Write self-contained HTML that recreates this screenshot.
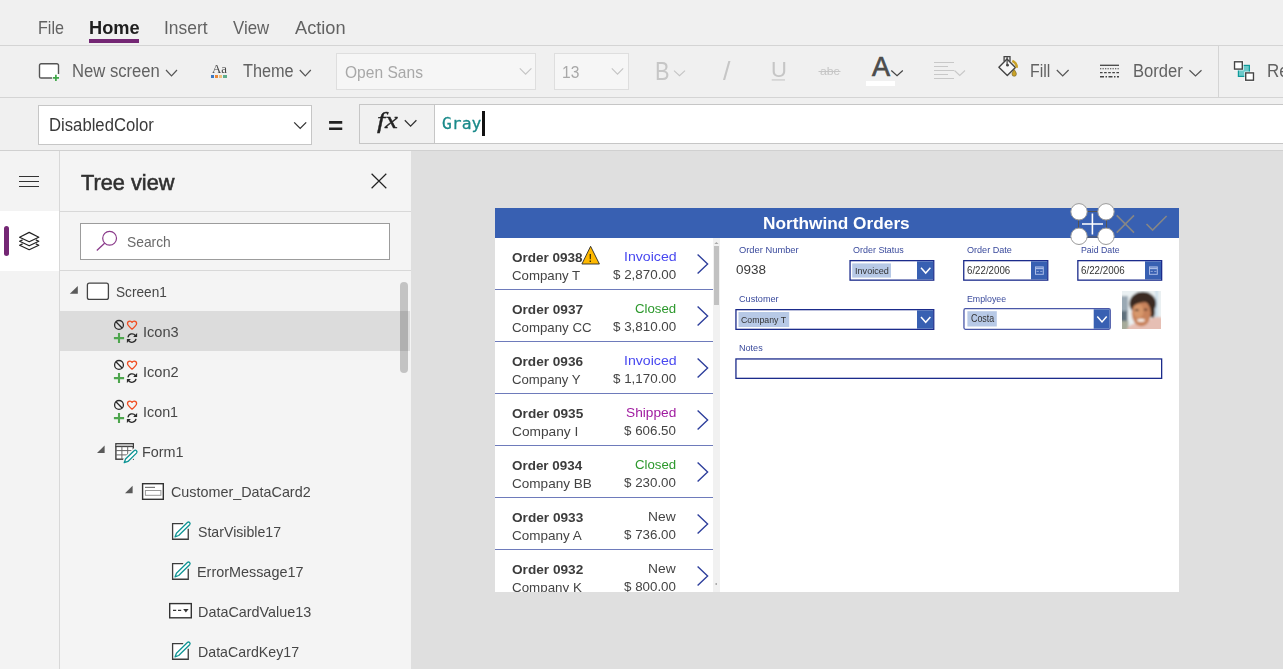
<!DOCTYPE html>
<html><head><meta charset="utf-8">
<style>
*{box-sizing:border-box;margin:0;padding:0}
html,body{width:1283px;height:669px;overflow:hidden;background:#f0f0f0;font-family:"Liberation Sans",sans-serif}
#root{position:relative;width:1283px;height:669px;overflow:hidden;background:#f0f0f0}
.t{position:absolute;white-space:nowrap;line-height:1;transform-origin:0 0}
#shapes{position:absolute;left:0;top:0}
#galclip{position:absolute;left:0;top:0;width:1283px;height:592px;overflow:hidden}
</style></head><body>
<div id="root">
<svg id="shapes" width="1283" height="669" viewBox="0 0 1283 669">
<defs>
 <filter id="blur" x="-10%" y="-10%" width="120%" height="120%"><feGaussianBlur stdDeviation="0.9"/></filter>
 <clipPath id="appclip"><rect x="495" y="208" width="684" height="384"/></clipPath>
 <clipPath id="photoclip"><rect x="1122" y="291" width="39" height="38"/></clipPath>
</defs>
<g shape-rendering="crispEdges">
 <!-- bars -->
 <rect x="0" y="0" width="1283" height="151" fill="#f0f0f0"/>
 <rect x="0" y="45" width="1283" height="1" fill="#d4d4d4"/>
 <rect x="0" y="97" width="1283" height="1" fill="#d4d4d4"/>
 <rect x="0" y="150" width="1283" height="1" fill="#d0d0d0"/>
 <rect x="89" y="39" width="50" height="4" fill="#742774"/>
 <!-- font dropdowns -->
 <rect x="336.5" y="53.5" width="199" height="36" fill="#f6f6f6" stroke="#dedede"/>
 <rect x="554.5" y="53.5" width="74" height="36" fill="#f6f6f6" stroke="#dedede"/>
 <rect x="1218" y="46" width="1" height="51" fill="#d4d4d4"/>
 <rect x="866" y="81" width="29" height="5" fill="#fff"/>
 <!-- formula bar -->
 <rect x="38.5" y="105.5" width="273" height="39" fill="#fff" stroke="#c6c6c6"/>
 <rect x="359.5" y="104.5" width="940" height="39" fill="#fff" stroke="#c6c6c6"/>
 <rect x="360" y="105" width="74" height="38" fill="#f1f1f1"/>
 <rect x="434" y="105" width="1" height="38" fill="#c6c6c6"/>
 <rect x="482" y="111" width="3" height="25" fill="#111"/>
 <!-- rail -->
 <rect x="0" y="151" width="59" height="518" fill="#f3f3f3"/>
 <rect x="59" y="151" width="1" height="518" fill="#d8d8d8"/>
 <rect x="0" y="211" width="59" height="60" fill="#fff"/>
 <!-- tree -->
 <rect x="60" y="151" width="351" height="518" fill="#f4f4f4"/>
 <rect x="60" y="211" width="351" height="1" fill="#d8d8d8"/>
 <rect x="60" y="270" width="351" height="1" fill="#d8d8d8"/>
 <rect x="80.5" y="223.5" width="309" height="36" fill="#fff" stroke="#9c9c9c"/>
 <rect x="60" y="311" width="350" height="40" fill="#dcdcdc"/>
 <!-- canvas -->
 <rect x="411" y="151" width="872" height="518" fill="#dfdfdf"/>
 <rect x="495" y="208" width="684" height="384" fill="#fff"/>
 <rect x="495" y="208" width="684" height="30" fill="#3860b2"/>
 <!-- gallery separators -->
 <g fill="#6e7bbb">
 <rect x="495" y="289" width="217.5" height="1"/><rect x="495" y="341" width="217.5" height="1"/><rect x="495" y="393" width="217.5" height="1"/>
 <rect x="495" y="445" width="217.5" height="1"/><rect x="495" y="497" width="217.5" height="1"/><rect x="495" y="549" width="217.5" height="1"/>
 </g>
 <!-- gallery scrollbar -->
 <rect x="713" y="238" width="7" height="354" fill="#f1f1f1"/>
 <rect x="714" y="246" width="5" height="59" fill="#c1c1c1"/>
</g>
<!-- rounded items -->
<rect x="4" y="226" width="5" height="30" rx="2.5" fill="#742774"/>
<rect x="400" y="282" width="8" height="91" rx="4" fill="#000" fill-opacity="0.2"/>
<rect x="39.5" y="63.8" width="19" height="14.2" rx="1.6" fill="#fff"/>
<path d="M52,78 H41.1 a1.6,1.6 0 0 1 -1.6,-1.6 V65.4 a1.6,1.6 0 0 1 1.6,-1.6 H56.9 a1.6,1.6 0 0 1 1.6,1.6 V74" fill="none" stroke="#555" stroke-width="1.4"/>
<path d="M52.8,77.8 H59 M55.9,74.7 V80.9" stroke="#3fa648" stroke-width="1.7"/>
<path d="M166.00,70.00 L171.50,75.80 L177.00,70.00" fill="none" stroke="#555" stroke-width="1.2"/>
<g shape-rendering="crispEdges"><rect x="210.6" y="75" width="3.4" height="3.4" fill="#3b78c4"/><rect x="215" y="75" width="3" height="3.4" fill="#e9873a"/><rect x="219" y="75" width="3" height="3.4" fill="#ecc17e"/><rect x="223" y="75" width="3.6" height="3.4" fill="#5fae8c"/></g>
<path d="M299.80,70.00 L305.30,75.90 L310.80,70.00" fill="none" stroke="#555" stroke-width="1.2"/>
<path d="M519.80,68.30 L525.60,74.20 L531.40,68.30" fill="none" stroke="#c4c4c4" stroke-width="1.1"/>
<path d="M611.80,68.30 L617.50,74.20 L623.20,68.30" fill="none" stroke="#c4c4c4" stroke-width="1.1"/>
<path d="M674.00,70.70 L679.50,75.70 L685.00,70.70" fill="none" stroke="#c4c4c4" stroke-width="1.1"/>
<rect x="771.7" y="79.4" width="13.3" height="1.1" fill="#c6c6c6"/>
<rect x="818.5" y="71" width="22" height="1" fill="#c6c6c6"/>
<path d="M891.30,70.50 L897.05,75.80 L902.80,70.50" fill="none" stroke="#444" stroke-width="1.2"/>
<g fill="#c8c8c8" shape-rendering="crispEdges"><rect x="934" y="62" width="20" height="1"/><rect x="934" y="66" width="14" height="1"/><rect x="934" y="70" width="20" height="1"/><rect x="934" y="74" width="14" height="1"/><rect x="934" y="78" width="20" height="1"/></g>
<path d="M954.50,70.50 L959.75,75.50 L965.00,70.50" fill="none" stroke="#c8c8c8" stroke-width="1.1"/>
<path d="M998.9,67.2 L1007,59.1 L1015.4,67.5 L1007.3,75.4 Z" fill="#f6f6f6" stroke="#444" stroke-width="1.4" stroke-linejoin="round"/>
<path d="M1004.1,61.5 V56.6 H1010 V61.5" fill="none" stroke="#444" stroke-width="1.3"/>
<path d="M1007.1,57 V65" stroke="#444" stroke-width="1.2"/><circle cx="1007.5" cy="65.2" r="1.4" fill="#444"/>
<path d="M1012.3,60.9 C1015,62 1016.7,64.6 1016.8,67.8" fill="none" stroke="#c9a227" stroke-width="2.5"/>
<path d="M1014.2,69.6 C1015.9,71.9 1016.4,73.1 1016.4,74.1 A2.2,2.2 0 0 1 1012,74.1 C1012,73.1 1012.5,71.9 1014.2,69.6 Z" fill="#c9a227" stroke="#5a4a10" stroke-width="0.5"/>
<path d="M1056.80,70.00 L1062.70,76.00 L1068.60,70.00" fill="none" stroke="#555" stroke-width="1.2"/>
<g stroke="#444"><path d="M1100,65.3 H1119" stroke-width="1.3"/><path d="M1100,68.8 H1119" stroke-width="1.1" stroke-dasharray="1.3,1.2"/><path d="M1100,72.7 H1119" stroke-width="1.2" stroke-dasharray="2.6,1.5"/><path d="M1100,76.7 H1119" stroke-width="1.6" stroke-dasharray="4,1.5,1.5,1.5"/></g>
<path d="M1189.50,70.20 L1195.50,76.00 L1201.50,70.20" fill="none" stroke="#555" stroke-width="1.2"/>
<rect x="1238.4" y="65.4" width="11" height="11" fill="#6ccaca" stroke="#0f9a9a" stroke-width="1.2"/>
<rect x="1233.2" y="60.5" width="10.4" height="9.9" fill="#fff"/><rect x="1244.4" y="71.6" width="10.4" height="9.9" fill="#fff"/>
<rect x="1234.5" y="61.8" width="7.8" height="7.3" fill="#fff" stroke="#444" stroke-width="1.4"/>
<rect x="1245.7" y="72.9" width="7.8" height="7.3" fill="#fff" stroke="#444" stroke-width="1.4"/>
<path d="M294.20,122.40 L300.20,128.40 L306.20,122.40" fill="none" stroke="#333" stroke-width="1.3"/>
<path d="M404.80,120.30 L410.60,126.10 L416.40,120.30" fill="none" stroke="#333" stroke-width="1.3"/>
<g fill="#333" shape-rendering="crispEdges"><rect x="19" y="176" width="20" height="1"/><rect x="19" y="181" width="20" height="1"/><rect x="19" y="186" width="20" height="1"/></g>
<g fill="none" stroke="#222" stroke-width="1.2" stroke-linejoin="round"><path d="M29.2,232.4 L38.8,237.2 L29.2,241.8 L19.6,237.2 Z"/><path d="M22.6,239.9 L19.6,241.3 L29.2,245.8 L38.8,241.3 L35.8,239.9"/><path d="M22.6,243.9 L19.6,245.3 L29.2,249.7 L38.8,245.3 L35.8,243.9"/></g>
<path d="M371.6,173.8 L386.3,188.2 M386.3,173.8 L371.6,188.2" stroke="#222" stroke-width="1.2"/>
<circle cx="109.6" cy="238.3" r="6.9" fill="none" stroke="#8a3a8a" stroke-width="1.2"/><path d="M104.6,243.2 L96.8,250.4" stroke="#8a3a8a" stroke-width="1.3"/>
<path d="M77.80,286.00 L77.80,293.70 L69.80,293.70 Z" fill="#5a5a5a"/>
<rect x="87.4" y="283.2" width="21" height="16.2" rx="2" fill="#fff" stroke="#444" stroke-width="1.3"/>
<g transform="translate(0,0.00)"><circle cx="119" cy="324.9" r="4.4" fill="none" stroke="#2a2a2a" stroke-width="1.3"/><path d="M115.9,321.8 L122.1,328" stroke="#2a2a2a" stroke-width="1.3"/><path d="M132.05,329.2 C129,326.7 127.5,325.2 127.5,323.6 C127.5,322.1 128.7,321.1 130,321.1 C130.9,321.1 131.6,321.6 132.05,322.4 C132.5,321.6 133.2,321.1 134.1,321.1 C135.4,321.1 136.6,322.1 136.6,323.6 C136.6,325.2 135.1,326.7 132.05,329.2 Z" fill="none" stroke="#f04e23" stroke-width="1.3" stroke-linejoin="round"/><path d="M113.9,338.1 H124.1 M119,333.1 V343.1" stroke="#4ea64e" stroke-width="2.1"/><path d="M128,337.3 A4.1,4.1 0 0 1 135.4,335.6" fill="none" stroke="#2a2a2a" stroke-width="1.3"/><path d="M137.1,333 V337 H133.1 Z" fill="#2a2a2a"/><path d="M136,338.9 A4.1,4.1 0 0 1 128.6,340.6" fill="none" stroke="#2a2a2a" stroke-width="1.3"/><path d="M126.9,343.1 V339.1 H130.9 Z" fill="#2a2a2a"/></g>
<g transform="translate(0,40.00)"><circle cx="119" cy="324.9" r="4.4" fill="none" stroke="#2a2a2a" stroke-width="1.3"/><path d="M115.9,321.8 L122.1,328" stroke="#2a2a2a" stroke-width="1.3"/><path d="M132.05,329.2 C129,326.7 127.5,325.2 127.5,323.6 C127.5,322.1 128.7,321.1 130,321.1 C130.9,321.1 131.6,321.6 132.05,322.4 C132.5,321.6 133.2,321.1 134.1,321.1 C135.4,321.1 136.6,322.1 136.6,323.6 C136.6,325.2 135.1,326.7 132.05,329.2 Z" fill="none" stroke="#f04e23" stroke-width="1.3" stroke-linejoin="round"/><path d="M113.9,338.1 H124.1 M119,333.1 V343.1" stroke="#4ea64e" stroke-width="2.1"/><path d="M128,337.3 A4.1,4.1 0 0 1 135.4,335.6" fill="none" stroke="#2a2a2a" stroke-width="1.3"/><path d="M137.1,333 V337 H133.1 Z" fill="#2a2a2a"/><path d="M136,338.9 A4.1,4.1 0 0 1 128.6,340.6" fill="none" stroke="#2a2a2a" stroke-width="1.3"/><path d="M126.9,343.1 V339.1 H130.9 Z" fill="#2a2a2a"/></g>
<g transform="translate(0,80.00)"><circle cx="119" cy="324.9" r="4.4" fill="none" stroke="#2a2a2a" stroke-width="1.3"/><path d="M115.9,321.8 L122.1,328" stroke="#2a2a2a" stroke-width="1.3"/><path d="M132.05,329.2 C129,326.7 127.5,325.2 127.5,323.6 C127.5,322.1 128.7,321.1 130,321.1 C130.9,321.1 131.6,321.6 132.05,322.4 C132.5,321.6 133.2,321.1 134.1,321.1 C135.4,321.1 136.6,322.1 136.6,323.6 C136.6,325.2 135.1,326.7 132.05,329.2 Z" fill="none" stroke="#f04e23" stroke-width="1.3" stroke-linejoin="round"/><path d="M113.9,338.1 H124.1 M119,333.1 V343.1" stroke="#4ea64e" stroke-width="2.1"/><path d="M128,337.3 A4.1,4.1 0 0 1 135.4,335.6" fill="none" stroke="#2a2a2a" stroke-width="1.3"/><path d="M137.1,333 V337 H133.1 Z" fill="#2a2a2a"/><path d="M136,338.9 A4.1,4.1 0 0 1 128.6,340.6" fill="none" stroke="#2a2a2a" stroke-width="1.3"/><path d="M126.9,343.1 V339.1 H130.9 Z" fill="#2a2a2a"/></g>
<path d="M104.60,445.40 L104.60,453.00 L97.00,453.00 Z" fill="#5a5a5a"/>
<rect x="115.9" y="443.75" width="17.4" height="15.45" fill="#fff" stroke="#3c3c3c" stroke-width="1.4"/><rect x="116.6" y="444.4" width="16" height="1.6" fill="#c2c2c2"/>
<path d="M115.5,446.6 H133.5" stroke="#3c3c3c" stroke-width="1.1"/><path d="M121.9,446.6 V459.5 M127.7,446.6 V459.5 M115.5,450.6 H133.5 M115.5,454.9 H133.5" stroke="#666" stroke-width="1"/>
<path d="M124.2,462.7 L127.96,461.41 L136.48,453.12 A1.7,1.7 0 0 0 134.12,450.68 L125.6,458.97 Z" fill="#f4f4f4" stroke="#f4f4f4" stroke-width="4.2" stroke-linejoin="round"/>
<path d="M124.2,462.7 L127.96,461.41 L136.48,453.12 A1.7,1.7 0 0 0 134.12,450.68 L125.6,458.97 Z" fill="#fff" stroke="#0e9494" stroke-width="1.3" stroke-linejoin="round"/>
<path d="M132.60,485.70 L132.60,493.20 L125.00,493.20 Z" fill="#5a5a5a"/>
<rect x="142.6" y="483.7" width="20.7" height="15.6" fill="#fff" stroke="#333" stroke-width="1.4"/><path d="M145,487.4 H155" stroke="#777" stroke-width="1.2"/><rect x="145.4" y="490.5" width="15.5" height="4.8" fill="#fff" stroke="#999" stroke-width="1"/>
<g transform="translate(0.00,0.00)"><rect x="172.6" y="523.65" width="15.65" height="15.6" fill="#fff"/><path d="M183.2,523.65 H172.6 V539.25 H188.25 V528.8" fill="none" stroke="#3c3c3c" stroke-width="1.3"/><path d="M175,536.9 L178.68,535.51 L189.62,524.74 A1.6,1.6 0 0 0 187.38,522.46 L176.44,533.23 Z" fill="#fff" stroke="#0e9494" stroke-width="1.3" stroke-linejoin="round"/></g>
<g transform="translate(0.00,40.00)"><rect x="172.6" y="523.65" width="15.65" height="15.6" fill="#fff"/><path d="M183.2,523.65 H172.6 V539.25 H188.25 V528.8" fill="none" stroke="#3c3c3c" stroke-width="1.3"/><path d="M175,536.9 L178.68,535.51 L189.62,524.74 A1.6,1.6 0 0 0 187.38,522.46 L176.44,533.23 Z" fill="#fff" stroke="#0e9494" stroke-width="1.3" stroke-linejoin="round"/></g>
<g transform="translate(0.00,120.00)"><rect x="172.6" y="523.65" width="15.65" height="15.6" fill="#fff"/><path d="M183.2,523.65 H172.6 V539.25 H188.25 V528.8" fill="none" stroke="#3c3c3c" stroke-width="1.3"/><path d="M175,536.9 L178.68,535.51 L189.62,524.74 A1.6,1.6 0 0 0 187.38,522.46 L176.44,533.23 Z" fill="#fff" stroke="#0e9494" stroke-width="1.3" stroke-linejoin="round"/></g>
<rect x="169.7" y="603.6" width="21.6" height="14.2" fill="#fff" stroke="#333" stroke-width="1.4"/><path d="M173,610.4 H176.2 M178,610.4 H181.2" stroke="#333" stroke-width="1.2"/><path d="M183.2,609 H188.6 L185.9,612.4 Z" fill="#333"/>
<path d="M697.6,254.60 L707.6,264.10 L697.6,273.60" fill="none" stroke="#2e3f9c" stroke-width="1.4" clip-path="url(#appclip)"/>
<path d="M697.6,306.60 L707.6,316.10 L697.6,325.60" fill="none" stroke="#2e3f9c" stroke-width="1.4" clip-path="url(#appclip)"/>
<path d="M697.6,358.60 L707.6,368.10 L697.6,377.60" fill="none" stroke="#2e3f9c" stroke-width="1.4" clip-path="url(#appclip)"/>
<path d="M697.6,410.60 L707.6,420.10 L697.6,429.60" fill="none" stroke="#2e3f9c" stroke-width="1.4" clip-path="url(#appclip)"/>
<path d="M697.6,462.60 L707.6,472.10 L697.6,481.60" fill="none" stroke="#2e3f9c" stroke-width="1.4" clip-path="url(#appclip)"/>
<path d="M697.6,514.60 L707.6,524.10 L697.6,533.60" fill="none" stroke="#2e3f9c" stroke-width="1.4" clip-path="url(#appclip)"/>
<path d="M697.6,566.60 L707.6,576.10 L697.6,585.60" fill="none" stroke="#2e3f9c" stroke-width="1.4" clip-path="url(#appclip)"/>
<path d="M714.3,244 L716.4,242 L718.5,244 Z" fill="#a8a8a8"/>
<rect x="715.5" y="583.5" width="1.5" height="1" fill="#666"/>
<path d="M590.6,246.3 L599.4,264 H581.9 Z" fill="#ffb900" stroke="#2a2a2a" stroke-width="0.9" stroke-linejoin="round"/>
<rect x="850.05" y="260.65" width="83.70" height="19.50" rx="0" fill="#fff" stroke="#1b2b8b" stroke-width="1.3"/><rect x="917.00" y="261.30" width="16.10" height="18.20" fill="#3860b2"/>
<rect x="852.2" y="263.4" width="38.8" height="14.2" fill="#b7c9e6"/>
<path d="M921.00,267.70 L925.70,273.10 L930.40,267.70" fill="none" stroke="#fff" stroke-width="1.5"/>
<rect x="963.75" y="260.65" width="84.00" height="19.50" rx="0" fill="#fff" stroke="#1b2b8b" stroke-width="1.3"/><rect x="1031.00" y="261.30" width="16.10" height="18.20" fill="#3860b2"/>
<g fill="none" stroke="#a9bbe6" stroke-width="1"><rect x="1035.50" y="266.90" width="7.8" height="7.4"/><path d="M1035.50,268.40 h7.8" stroke-width="1.6"/><path d="M1036.60,271.40 h2.2 m1.4,0 h2.2" stroke-width="0.8"/></g>
<rect x="1077.85" y="260.65" width="83.80" height="19.50" rx="0" fill="#fff" stroke="#1b2b8b" stroke-width="1.3"/><rect x="1145.00" y="261.30" width="16.00" height="18.20" fill="#3860b2"/>
<g fill="none" stroke="#a9bbe6" stroke-width="1"><rect x="1149.50" y="266.90" width="7.8" height="7.4"/><path d="M1149.50,268.40 h7.8" stroke-width="1.6"/><path d="M1150.60,271.40 h2.2 m1.4,0 h2.2" stroke-width="0.8"/></g>
<rect x="735.95" y="309.65" width="197.80" height="19.70" rx="0" fill="#fff" stroke="#1b2b8b" stroke-width="1.3"/><rect x="917.00" y="310.30" width="16.10" height="18.40" fill="#3860b2"/>
<rect x="738.5" y="312" width="50.7" height="15" fill="#b7c9e6"/>
<path d="M921.00,316.90 L925.70,322.30 L930.40,316.90" fill="none" stroke="#fff" stroke-width="1.5"/>
<rect x="963.95" y="308.65" width="146.30" height="20.70" rx="1.5" fill="#fff" stroke="#4a58a8" stroke-width="1.3"/><rect x="1093.70" y="309.30" width="15.90" height="19.40" fill="#3860b2"/>
<rect x="967.4" y="311.2" width="29.4" height="15.3" fill="#b7c9e6"/>
<path d="M1097.30,316.50 L1102.00,321.90 L1106.70,316.50" fill="none" stroke="#fff" stroke-width="1.5"/>
<rect x="735.95" y="358.95" width="425.70" height="19.40" rx="0" fill="#fff" stroke="#1b2b8b" stroke-width="1.3"/>
<g clip-path="url(#photoclip)"><g filter="url(#blur)" transform="translate(1122,291)">
<rect x="-3" y="-3" width="45" height="44" fill="#eaf0f2"/>
<rect x="-2" y="5" width="8" height="16" fill="#9aa9b4"/><rect x="-2" y="20" width="7.5" height="10" fill="#5f6f7c"/>
<rect x="-2" y="30" width="8.5" height="12" fill="#a6ab9b"/>
<rect x="33.6" y="-2" width="2" height="29" fill="#c2d9e8"/>
<path d="M4,41 C6,34 11,32 16,32.5 L29,28 C33,25.5 38,25.5 42,27 V41 Z" fill="#e6bfb4"/>
<ellipse cx="20.8" cy="12.5" rx="13.4" ry="11.8" fill="#3a2920"/>
<path d="M27,12 C33,14 34.5,21 31.5,27 L26,25 Z" fill="#3a2920"/>
<ellipse cx="19.3" cy="22.2" rx="9.6" ry="13" fill="#c8835b"/>
<ellipse cx="16.5" cy="20" rx="5" ry="7" fill="#d7976c"/>
<path d="M9,15 C11.5,9 20,7 27.5,11.5 C22,10.5 14,11.5 9.5,17 Z" fill="#3a2920"/>
<ellipse cx="14.8" cy="19.2" rx="2.1" ry="0.9" fill="#4a3026"/><ellipse cx="23.6" cy="18.6" rx="2.1" ry="0.9" fill="#4a3026"/>
<ellipse cx="19" cy="29.3" rx="3.8" ry="1.5" fill="#f8f1ea"/>
</g></g>
<path d="M1116.7,215.4 L1134,232.6 M1134,215.4 L1116.7,232.6" stroke="#868686" stroke-width="1.6"/>
<path d="M1146.5,224 L1152.6,230 L1166.6,216" fill="none" stroke="#868686" stroke-width="1.6"/>
<path d="M1082,224 H1103 M1092.4,213.6 V234.6" stroke="#fff" stroke-width="1.6"/>
<rect x="1078.5" y="211.5" width="28" height="25.5" fill="none" stroke="#555" stroke-width="1"/>
<circle cx="1079" cy="211.8" r="8.2" fill="#fff" stroke="#9a9a9a" stroke-width="1"/>
<circle cx="1106" cy="211.8" r="8.2" fill="#fff" stroke="#9a9a9a" stroke-width="1"/>
<circle cx="1079" cy="236.3" r="8.2" fill="#fff" stroke="#9a9a9a" stroke-width="1"/>
<circle cx="1106" cy="236.3" r="8.2" fill="#fff" stroke="#9a9a9a" stroke-width="1"/>
</svg>
<span class="t" style="left:37.81px;top:18px;font-size:18.2px;line-height:20px;color:#626262;transform:scaleX(0.8868);">File</span>
<span class="t" style="left:88.50px;top:18px;font-size:18.2px;line-height:20px;color:#1e1e1e;font-weight:bold;transform:scaleX(1.0017);">Home</span>
<span class="t" style="left:163.54px;top:18px;font-size:18.2px;line-height:20px;color:#626262;transform:scaleX(0.9565);">Insert</span>
<span class="t" style="left:232.50px;top:18px;font-size:18.2px;line-height:20px;color:#626262;transform:scaleX(0.9260);">View</span>
<span class="t" style="left:294.50px;top:18px;font-size:18.2px;line-height:20px;color:#626262;transform:scaleX(1.0013);">Action</span>
<span class="t" style="left:71.55px;top:61px;font-size:17.5px;line-height:20px;color:#626262;transform:scaleX(0.9508);">New screen</span>
<span class="t" style="left:242.50px;top:61px;font-size:17.5px;line-height:20px;color:#626262;transform:scaleX(0.9305);">Theme</span>
<span class="t" style="left:344.50px;top:63px;font-size:17px;line-height:19px;color:#a8a8a8;transform:scaleX(0.9165);">Open Sans</span>
<span class="t" style="left:562.08px;top:63px;font-size:17px;line-height:19px;color:#a8a8a8;transform:scaleX(0.9167);">13</span>
<span class="t" style="left:655.26px;top:57px;font-size:25px;line-height:28px;color:#c6c6c6;transform:scaleX(0.8714);">B</span>
<span class="t" style="left:722.50px;top:57px;font-size:25px;line-height:28px;color:#c6c6c6;transform:scaleX(1.0714);">/</span>
<span class="t" style="left:770.68px;top:58px;font-size:21.5px;line-height:24px;color:#c6c6c6;transform:scaleX(1.0231);">U</span>
<span class="t" style="left:819.50px;top:65px;font-size:11.5px;line-height:12px;color:#c6c6c6;transform:scaleX(1.0643);">abc</span>
<span class="t" style="left:872.00px;top:52px;font-size:27px;line-height:30px;color:#4c4c4c;transform:scaleX(1.0000);-webkit-text-stroke:0.7px #4c4c4c;">A</span>
<span class="t" style="left:1030.09px;top:61px;font-size:17.5px;line-height:20px;color:#626262;transform:scaleX(0.9088);">Fill</span>
<span class="t" style="left:1132.65px;top:61px;font-size:17.5px;line-height:20px;color:#626262;transform:scaleX(0.9478);">Border</span>
<span class="t" style="left:1267.03px;top:61px;font-size:17.5px;line-height:20px;color:#626262;transform:scaleX(0.9691);">Re</span>
<span class="t" style="left:327.61px;top:112px;font-size:24px;line-height:27px;color:#222;font-weight:bold;transform:scaleX(1.0923);">=</span>
<span class="t" style="left:49.05px;top:115px;font-size:17.5px;line-height:20px;color:#3a3a3a;transform:scaleX(0.9534);">DisabledColor</span>
<span class="t" style="left:376.70px;top:107px;font-size:24px;line-height:26px;color:#222;font-style:italic;font-family:'Liberation Serif',serif;transform:scaleX(1.2056);-webkit-text-stroke:0.35px #222;">fx</span>
<span class="t" style="left:441.70px;top:114px;font-size:16.3px;line-height:19px;color:#1a8a8a;font-family:'DejaVu Sans Mono','Liberation Mono',monospace;transform:scaleX(1.0024);-webkit-text-stroke:0.3px #1a8a8a;">Gray</span>
<span class="t" style="left:81.20px;top:171px;font-size:21.5px;line-height:24px;color:#303030;transform:scaleX(1.0122);-webkit-text-stroke:0.55px #303030;">Tree view</span>
<span class="t" style="left:126.60px;top:234px;font-size:14.8px;line-height:16px;color:#6a6a6a;transform:scaleX(0.9345);">Search</span>
<span class="t" style="left:115.70px;top:284px;font-size:14.6px;line-height:16px;color:#464646;transform:scaleX(0.9347);">Screen1</span>
<span class="t" style="left:142.50px;top:324px;font-size:14.6px;line-height:16px;color:#464646;transform:scaleX(1.0005);">Icon3</span>
<span class="t" style="left:142.50px;top:364px;font-size:14.6px;line-height:16px;color:#464646;transform:scaleX(1.0005);">Icon2</span>
<span class="t" style="left:142.52px;top:404px;font-size:14.6px;line-height:16px;color:#464646;transform:scaleX(0.9831);">Icon1</span>
<span class="t" style="left:142.21px;top:444px;font-size:14.6px;line-height:16px;color:#464646;transform:scaleX(0.9867);">Form1</span>
<span class="t" style="left:170.50px;top:484px;font-size:14.6px;line-height:16px;color:#464646;transform:scaleX(0.9836);">Customer_DataCard2</span>
<span class="t" style="left:198.20px;top:524px;font-size:14.6px;line-height:16px;color:#464646;transform:scaleX(0.9695);">StarVisible17</span>
<span class="t" style="left:197.21px;top:564px;font-size:14.6px;line-height:16px;color:#464646;transform:scaleX(0.9863);">ErrorMessage17</span>
<span class="t" style="left:197.81px;top:604px;font-size:14.6px;line-height:16px;color:#464646;transform:scaleX(0.9858);">DataCardValue13</span>
<span class="t" style="left:197.83px;top:644px;font-size:14.6px;line-height:16px;color:#464646;transform:scaleX(0.9735);">DataCardKey17</span>
<span class="t" style="left:763.25px;top:214px;font-size:16.5px;line-height:18px;color:#fff;font-weight:bold;transform:scaleX(1.0461);">Northwind Orders</span>
<span class="t" style="left:589.15px;top:252px;font-size:10.6px;line-height:12px;color:#000;font-weight:bold;transform:scaleX(0.7000);">!</span>
<span class="t" style="left:738.50px;top:244px;font-size:9.5px;line-height:11px;color:#3a4a9c;transform:scaleX(0.9827);">Order Number</span>
<span class="t" style="left:852.60px;top:244px;font-size:9.5px;line-height:11px;color:#3a4a9c;transform:scaleX(0.9426);">Order Status</span>
<span class="t" style="left:966.80px;top:244px;font-size:9.5px;line-height:11px;color:#3a4a9c;transform:scaleX(0.9549);">Order Date</span>
<span class="t" style="left:1081.00px;top:244px;font-size:9.5px;line-height:11px;color:#3a4a9c;transform:scaleX(0.9243);">Paid Date</span>
<span class="t" style="left:738.50px;top:293px;font-size:9.5px;line-height:11px;color:#3a4a9c;transform:scaleX(0.9631);">Customer</span>
<span class="t" style="left:966.80px;top:293px;font-size:9.5px;line-height:11px;color:#3a4a9c;transform:scaleX(0.9271);">Employee</span>
<span class="t" style="left:738.50px;top:342px;font-size:9.5px;line-height:11px;color:#3a4a9c;transform:scaleX(0.9534);">Notes</span>
<span class="t" style="left:735.80px;top:263px;font-size:12.6px;line-height:14px;color:#3a3a3a;transform:scaleX(1.0710);">0938</span>
<span class="t" style="left:855.00px;top:265px;font-size:9.4px;line-height:11px;color:#333;transform:scaleX(0.9711);">Invoiced</span>
<span class="t" style="left:966.60px;top:265px;font-size:10.4px;line-height:11px;color:#333;transform:scaleX(0.9344);">6/22/2006</span>
<span class="t" style="left:1080.50px;top:265px;font-size:10.4px;line-height:11px;color:#333;transform:scaleX(0.9430);">6/22/2006</span>
<span class="t" style="left:741.00px;top:314px;font-size:9.4px;line-height:11px;color:#333;transform:scaleX(0.9317);">Company T</span>
<span class="t" style="left:971.00px;top:313px;font-size:10.4px;line-height:11px;color:#333;transform:scaleX(0.8515);">Costa</span>
<span class="t" style="left:211.70px;top:62px;font-size:12.7px;line-height:14px;color:#444;font-family:'Liberation Serif',serif;transform:scaleX(1.0157);">Aa</span>
<div id="galclip">
<span class="t" style="left:511.80px;top:250px;font-size:13px;line-height:15px;color:#3c3c3c;font-weight:bold;transform:scaleX(1.0398);">Order 0938</span>
<span class="t" style="left:511.80px;top:268px;font-size:13px;line-height:15px;color:#444;transform:scaleX(1.0186);">Company T</span>
<span class="t" style="left:623.61px;top:249px;font-size:13px;line-height:15px;color:#4848f0;transform:scaleX(1.0871);">Invoiced</span>
<span class="t" style="left:613.00px;top:267px;font-size:13px;line-height:15px;color:#444;transform:scaleX(1.0292);">$ 2,870.00</span>
<span class="t" style="left:511.80px;top:302px;font-size:13px;line-height:15px;color:#3c3c3c;font-weight:bold;transform:scaleX(1.0457);">Order 0937</span>
<span class="t" style="left:511.80px;top:320px;font-size:13px;line-height:15px;color:#444;transform:scaleX(1.0201);">Company CC</span>
<span class="t" style="left:635.10px;top:301px;font-size:13px;line-height:15px;color:#2c982c;transform:scaleX(1.0165);">Closed</span>
<span class="t" style="left:613.00px;top:319px;font-size:13px;line-height:15px;color:#444;transform:scaleX(1.0292);">$ 3,810.00</span>
<span class="t" style="left:511.80px;top:354px;font-size:13px;line-height:15px;color:#3c3c3c;font-weight:bold;transform:scaleX(1.0457);">Order 0936</span>
<span class="t" style="left:511.80px;top:372px;font-size:13px;line-height:15px;color:#444;transform:scaleX(1.0139);">Company Y</span>
<span class="t" style="left:623.61px;top:353px;font-size:13px;line-height:15px;color:#4848f0;transform:scaleX(1.0871);">Invoiced</span>
<span class="t" style="left:613.00px;top:371px;font-size:13px;line-height:15px;color:#444;transform:scaleX(1.0292);">$ 1,170.00</span>
<span class="t" style="left:511.80px;top:406px;font-size:13px;line-height:15px;color:#3c3c3c;font-weight:bold;transform:scaleX(1.0487);">Order 0935</span>
<span class="t" style="left:511.80px;top:424px;font-size:13px;line-height:15px;color:#444;transform:scaleX(1.0554);">Company I</span>
<span class="t" style="left:626.00px;top:405px;font-size:13px;line-height:15px;color:#a01ca0;transform:scaleX(1.0531);">Shipped</span>
<span class="t" style="left:624.30px;top:423px;font-size:13px;line-height:15px;color:#444;transform:scaleX(1.0263);">$ 606.50</span>
<span class="t" style="left:511.80px;top:458px;font-size:13px;line-height:15px;color:#3c3c3c;font-weight:bold;transform:scaleX(1.0334);">Order 0934</span>
<span class="t" style="left:511.80px;top:476px;font-size:13px;line-height:15px;color:#444;transform:scaleX(1.0419);">Company BB</span>
<span class="t" style="left:635.10px;top:457px;font-size:13px;line-height:15px;color:#2c982c;transform:scaleX(1.0165);">Closed</span>
<span class="t" style="left:624.30px;top:475px;font-size:13px;line-height:15px;color:#444;transform:scaleX(1.0263);">$ 230.00</span>
<span class="t" style="left:511.80px;top:510px;font-size:13px;line-height:15px;color:#3c3c3c;font-weight:bold;transform:scaleX(1.0487);">Order 0933</span>
<span class="t" style="left:511.80px;top:528px;font-size:13px;line-height:15px;color:#444;transform:scaleX(1.0374);">Company A</span>
<span class="t" style="left:647.74px;top:509px;font-size:13px;line-height:15px;color:#444;transform:scaleX(1.0617);">New</span>
<span class="t" style="left:624.30px;top:527px;font-size:13px;line-height:15px;color:#444;transform:scaleX(1.0263);">$ 736.00</span>
<span class="t" style="left:511.80px;top:562px;font-size:13px;line-height:15px;color:#3c3c3c;font-weight:bold;transform:scaleX(1.0487);">Order 0932</span>
<span class="t" style="left:511.80px;top:580px;font-size:13px;line-height:15px;color:#444;transform:scaleX(1.0286);">Company K</span>
<span class="t" style="left:647.74px;top:561px;font-size:13px;line-height:15px;color:#444;transform:scaleX(1.0617);">New</span>
<span class="t" style="left:624.30px;top:579px;font-size:13px;line-height:15px;color:#444;transform:scaleX(1.0263);">$ 800.00</span>
</div>
<!--OVERLAY-->
</div>
</body></html>
